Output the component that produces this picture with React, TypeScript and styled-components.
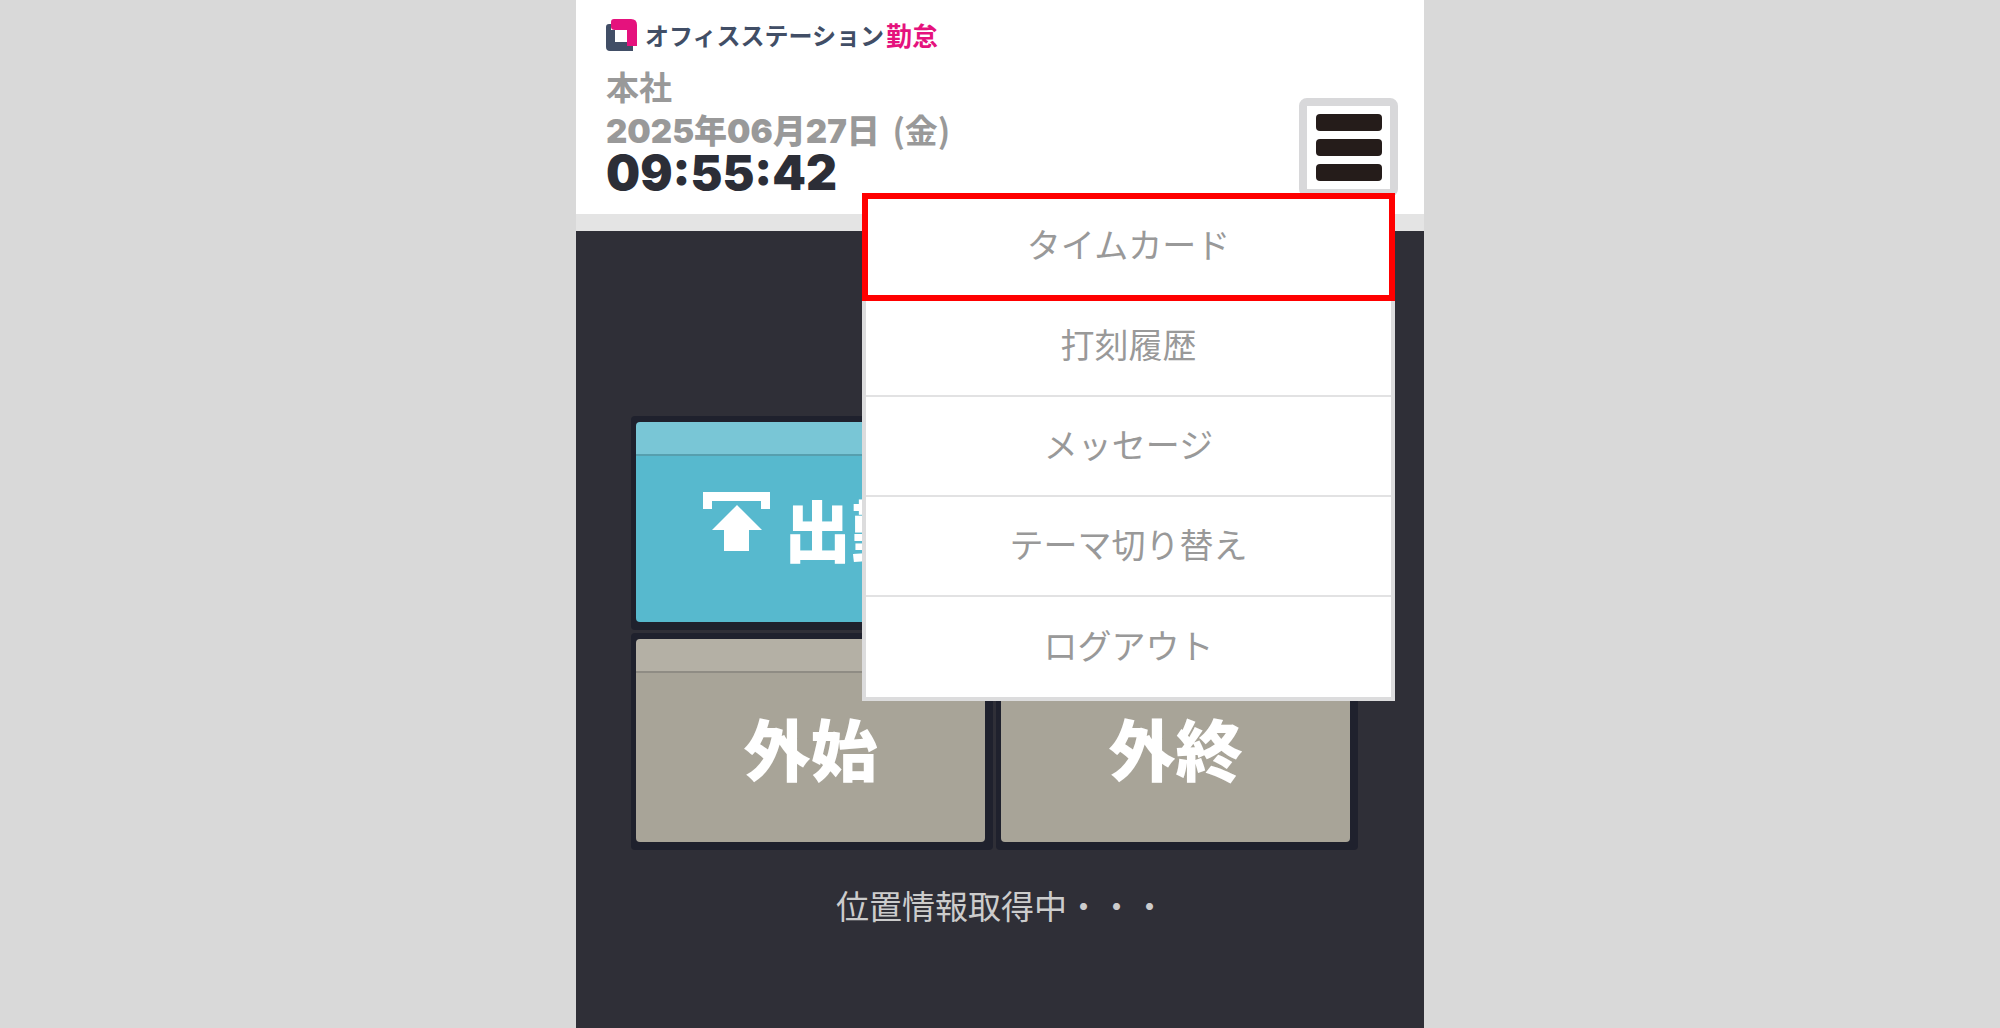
import React from "react";
import styled, { createGlobalStyle } from "styled-components";

const GlobalStyle = createGlobalStyle`
  *, *::before, *::after { box-sizing: border-box; }
  body {
    margin: 0;
    background: #d9d9d9;
    font-family: "Noto Sans CJK JP", sans-serif;
  }
`;

const Screen = styled.div`
  display: flex;
  flex-direction: column;
  width: 100%;
  max-width: 848px;
  min-height: 100vh;
  margin: 0 auto;
  background: #2f2f37;
`;

const Header = styled.header`
  display: flex;
  justify-content: space-between;
  align-items: flex-end;
  padding: 16px 26px 17px 30px;
  background: #fff;
  border-bottom: 17px solid #e4e4e4;
`;

const Info = styled.div`
  display: flex;
  flex-direction: column;
  padding-bottom: 7px;
`;

const Brand = styled.div`
  display: flex;
  align-items: center;
  height: 38px;
  font-size: 24px;
  font-weight: 700;
  line-height: 38px;
  color: #414e66;
`;

const BrandMark = styled.svg`
  width: 32px;
  height: 32px;
  margin-right: 7px;
`;

const BrandProduct = styled.span`
  margin-left: 2px;
  font-size: 26px;
  color: #e5127d;
`;

const Site = styled.div`
  margin-top: 10px;
  font-size: 33px;
  font-weight: 700;
  line-height: 44px;
  color: #999;
`;

const DateLine = styled.div`
  height: 48px;
  font-family: Inter, "Noto Sans CJK JP", sans-serif;
  font-size: 33px;
  font-weight: 900;
  line-height: 46px;
  color: #999;
`;

const Weekday = styled.span`
  margin-left: 6px;
  font-family: "Noto Sans CJK JP", sans-serif;
  font-weight: 700;
  line-height: 1;
`;

const Clock = styled.time`
  font-family: Inter, "Noto Sans CJK JP", sans-serif;
  font-size: 48px;
  font-weight: 900;
  line-height: 34px;
  color: #2c2e37;
`;

const MenuAnchor = styled.div`
  position: relative;
  display: flex;
`;

const MenuButton = styled.button`
  display: flex;
  flex-direction: column;
  justify-content: center;
  align-items: center;
  gap: 8px;
  width: 99px;
  height: 99px;
  padding: 0;
  background: #fff;
  border: 8px solid #d8d8da;
  border-radius: 8px;
`;

const MenuBar = styled.span`
  width: 66px;
  height: 17px;
  background: #251c1a;
  border-radius: 4px;
`;

const Menu = styled.nav`
  position: absolute;
  top: 95px;
  right: 3px;
  z-index: 1;
  width: 533px;
  background: #fff;
  border: 4px solid #dcdcdd;
`;

const MenuItem = styled.a<{ $active?: boolean }>`
  display: flex;
  justify-content: center;
  align-items: center;
  height: 100px;
  padding-bottom: 4px;
  border-bottom: 2px solid #e2e2e3;
  font-size: 34px;
  line-height: 44px;
  color: #999;
  text-decoration: none;
  outline: ${(p) => (p.$active ? "6px solid #f00" : "none")};
  outline-offset: -2px;

  &:last-child { border-bottom: 0; }
`;

const Main = styled.main`
  display: flex;
  flex-direction: column;
  padding: 185px 66px 0 55px;
`;

const Tiles = styled.div`
  display: grid;
  grid-template-columns: 1fr 1fr;
  grid-template-rows: 214px 217px;
  gap: 3px;
`;

const Tile = styled.button<{ $tone: "cyan" | "stone"; $start?: boolean }>`
  grid-column-start: ${(p) => (p.$start ? 1 : "auto")};
  display: flex;
  padding: 6px 8px 8px 5px;
  background: #1f212d;
  border: 0;
  border-radius: 4px;
  font-family: inherit;
  font-size: 67px;
  font-weight: 900;
  line-height: 80px;
  color: #fff;
  --face: ${(p) => (p.$tone === "cyan" ? "#57b9ce" : "#a8a498")};
  --band: ${(p) => (p.$tone === "cyan" ? "#79c6d6" : "#b4b0a5")};
  --rule: ${(p) => (p.$tone === "cyan" ? "#569fae" : "#8f8c84")};
`;

const TileFace = styled.span`
  display: flex;
  justify-content: center;
  align-items: center;
  gap: 14px;
  width: 100%;
  height: 100%;
  padding-top: 12px;
  background: linear-gradient(var(--band) 32px, var(--rule) 32px 34px, var(--face) 34px);
  border-radius: 4px;
`;

const ClockInIcon = styled.svg`
  width: 67px;
  height: 60px;
  margin-bottom: 12px;
`;

const Status = styled.p`
  margin: 33px 0 0;
  padding-left: 13px;
  font-size: 33px;
  line-height: 44px;
  text-align: center;
  color: #ccc;
`;

const menuItems = ["タイムカード", "打刻履歴", "メッセージ", "テーマ切り替え", "ログアウト"];

export default function App() {
  return (
    <>
      <GlobalStyle />
      <Screen>
        <Header>
          <Info>
            <Brand>
              <BrandMark viewBox="0 0 32 32" aria-hidden="true">
                <path fill="#414e66" d="M5 5H3Q0 5 0 8V28Q0 32 4 32H27V23H9V11H5Z" />
                <path fill="#e5127d" d="M5 3Q5 0 8 0H25Q31 0 31 6V27H21V11H9Q5 11 5 8Z" />
              </BrandMark>
              オフィスステーション
              <BrandProduct>勤怠</BrandProduct>
            </Brand>
            <Site>本社</Site>
            <DateLine>
              2025年06月27日 <Weekday>(金)</Weekday>
            </DateLine>
            <Clock>09:55:42</Clock>
          </Info>
          <MenuAnchor>
            <MenuButton type="button" aria-label="メニュー" aria-expanded="true">
              <MenuBar />
              <MenuBar />
              <MenuBar />
            </MenuButton>
            <Menu>
              {menuItems.map((label, i) => (
                <MenuItem key={label} href="#" $active={i === 0}>
                  {label}
                </MenuItem>
              ))}
            </Menu>
          </MenuAnchor>
        </Header>
        <Main>
          <Tiles>
            <Tile type="button" $tone="cyan">
              <TileFace>
                <ClockInIcon viewBox="0 0 67 60" fill="#fff" aria-hidden="true">
                  <path d="M0 0H67V17H58V9H9V17H0Z" />
                  <path d="M34 13L59 38H46V59H21V38H9Z" />
                </ClockInIcon>
                出勤
              </TileFace>
            </Tile>
            <Tile type="button" $tone="stone" $start>
              <TileFace>外始</TileFace>
            </Tile>
            <Tile type="button" $tone="stone">
              <TileFace>外終</TileFace>
            </Tile>
          </Tiles>
          <Status>位置情報取得中・・・</Status>
        </Main>
      </Screen>
    </>
  );
}
